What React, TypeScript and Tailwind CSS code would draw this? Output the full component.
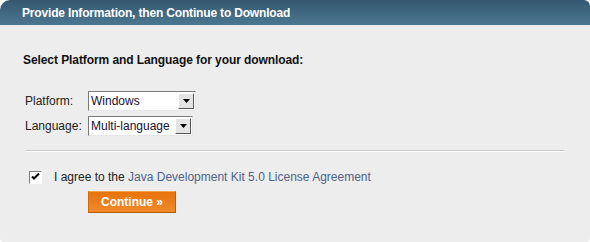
import React from 'react';

function FakeSelect({ value, width }: { value: string; width: string }) {
  return (
    <div
      className={`flex h-[20px] items-stretch border border-t-[#7a7a7a] border-l-[#7a7a7a] border-b-[#e6e6e6] border-r-[#e6e6e6] bg-white ${width}`}
    >
      <div className="flex flex-1 items-center overflow-hidden whitespace-nowrap pl-[2px] text-[12px] text-[#1a0f33]">
        {value}
      </div>
      <div className="m-[1px] flex w-[16px] items-center justify-center border border-t-white border-l-white border-b-[#555] border-r-[#555] bg-[#e4e4e4]">
        <svg width="7" height="4" viewBox="0 0 7 4">
          <path d="M0 0h7L3.5 4z" fill="#000" />
        </svg>
      </div>
    </div>
  );
}

export default function App() {
  return (
    <div className="h-[242px] w-[590px] bg-white font-['Liberation_Sans',Arial,sans-serif]">
      <div className="flex h-[25px] items-center rounded-tl-[10px] rounded-tr-[6px] bg-gradient-to-b from-[#355870] to-[#4c7791] pl-[22px] text-[12px] font-bold tracking-[-0.17px] text-white">
        Provide Information, then Continue to Download
      </div>
      <div className="flex h-[217px] flex-col rounded-b-[4px] bg-[#ededed] pl-[23px] pr-[26px]">
        <div className="mt-[26px] text-[12px] font-bold tracking-[-0.08px] text-[#111]">
          Select Platform and Language for your download:
        </div>
        <div className="mt-[22px] flex flex-col gap-[5px] pl-[2px] text-[12px] text-[#222]">
          <div className="flex items-center">
            <span className="w-[63px]">Platform:</span>
            <FakeSelect value="Windows" width="w-[108px]" />
          </div>
          <div className="flex items-center">
            <span className="w-[63px]">Language:</span>
            <FakeSelect value="Multi-language" width="w-[105px]" />
          </div>
        </div>
        <div className="mt-[14px] ml-[2px] border-t border-b border-t-[#c8c8c8] border-b-white" />
        <div className="mt-[16px] flex items-center pl-[6px] text-[12px]">
          <div className="flex h-[13px] w-[13px] items-center justify-center border border-t-[#808080] border-l-[#808080] border-b-white border-r-white bg-white">
            <svg width="9" height="8" viewBox="0 0 9 8">
              <path d="M1 3.5l2 2L8 0.5" fill="none" stroke="#000" strokeWidth="2" />
            </svg>
          </div>
          <span className="ml-[12px] text-[#222]">
            I agree to the{' '}
            <span className="text-[#4d6488]">Java Development Kit 5.0 License Agreement</span>
          </span>
        </div>
        <div className="mt-[3px] ml-[65px]">
          <button className="h-[22px] w-[88px] border border-t-[#f5a050] border-l-[#d06a10] border-r-[#c05e0a] border-b-[#b85a08] bg-gradient-to-b from-[#e8730a] to-[#ef8a2a] text-[12px] font-bold text-white">
            Continue »
          </button>
        </div>
      </div>
    </div>
  );
}
